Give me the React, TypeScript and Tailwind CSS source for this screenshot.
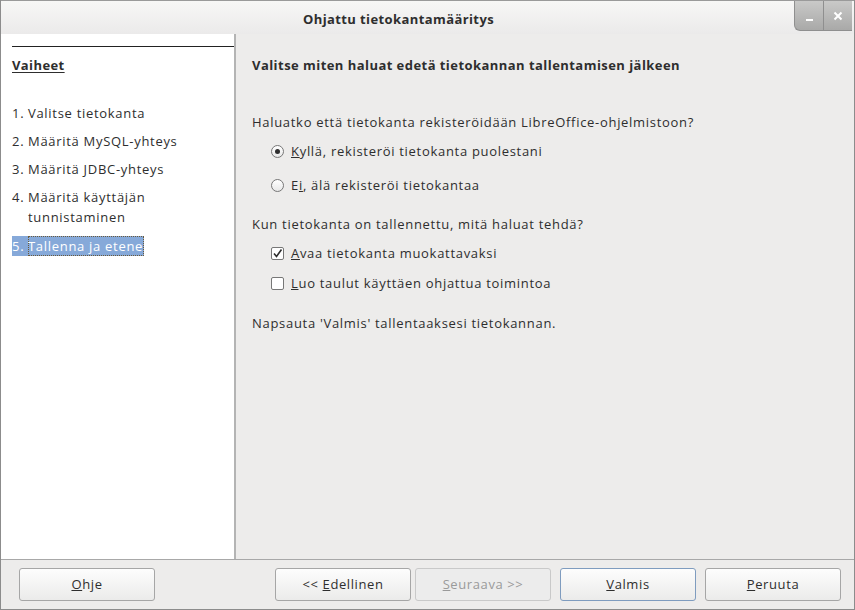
import React from 'react';

const font = { fontFamily: '"Open Sans", "DejaVu Sans", sans-serif' };

function Btn({ children, disabled, focused, className = '' }: { children: React.ReactNode; disabled?: boolean; focused?: boolean; className?: string }) {
  return (
    <div
      className={`h-[33px] w-[136px] flex items-center justify-center rounded-[3px] border text-[13px] tracking-[0.6px] ${
        focused ? 'border-[#7f9cbf]' : 'border-[#a6a6a6]'
      } ${disabled ? 'text-[#9a9a9a] bg-[#ececec] border-[#c9c9c9]' : 'text-[#2e2e2e] bg-gradient-to-b from-[#fdfdfd] to-[#ebebea]'} ${className}`}
    >
      {children}
    </div>
  );
}

function Step({ n, children }: { n: string; children: React.ReactNode }) {
  return (
    <div className="flex">
      <span className="w-[16px] shrink-0">{n}</span>
      <span>{children}</span>
    </div>
  );
}

export default function App() {
  return (
    <div className="w-[855px] h-[610px] flex flex-col bg-[#edeceb] border-x border-b border-[#8c8c8c] overflow-hidden text-[#2e3436]" style={font}>
      {/* title bar */}
      <div className="h-[34px] flex items-start relative bg-gradient-to-b from-[#f7f7f6] to-[#ebeaea] border-t border-[#9a9a9a]">
        <div className="flex-1 text-center pt-[9px] text-[13px] font-bold tracking-[0.4px] text-[#2e2e2e] pl-[-20px] mr-[110px] ml-[52px]">Ohjattu tietokantamääritys</div>
        <div className="absolute right-[2px] top-0 flex h-[30px] rounded-bl-[6px] overflow-hidden bg-gradient-to-b from-[#c9c9c8] to-[#a9a9a8] border-l border-b border-[#8f8f8f]">
          <div className="w-[28px] flex items-end justify-center pb-[9px]">
            <span className="w-[7px] h-[2px] bg-white" />
          </div>
          <div className="w-px bg-[#8f8f8f]" />
          <div className="w-[28px] flex items-center justify-center">
            <svg width="10" height="10" viewBox="0 0 10 10">
              <path d="M1.5 1.5 L8.5 8.5 M8.5 1.5 L1.5 8.5" stroke="white" strokeWidth="2" />
            </svg>
          </div>
        </div>
      </div>

      <div className="flex-1 flex">
        {/* steps panel */}
        <div className="w-[235px] bg-white border-r-2 border-[#b4b4b4] pl-[11px] pt-[12px] text-[13px] tracking-[0.7px] text-[#2e2e2e]">
          <div className="h-px bg-[#222]" />
          <div className="mt-[10px] font-bold tracking-[0.4px] underline underline-offset-2 leading-[16px]">Vaiheet</div>
          <div className="mt-[32px] flex flex-col gap-[11px] leading-[17px]">
            <Step n="1.">Valitse tietokanta</Step>
            <Step n="2.">Määritä MySQL-yhteys</Step>
            <Step n="3.">Määritä JDBC-yhteys</Step>
            <div className="flex">
              <span className="w-[16px] shrink-0">4.</span>
              <span className="leading-[20px] -mt-[2px]">Määritä käyttäjän<br />tunnistaminen</span>
            </div>
            <div className="flex -mt-[2px]">
              <span className="bg-[#86a9d9] text-white h-[20px] leading-[20px] flex">
                <span className="w-[16px]">5.</span>
                <span className="outline outline-1 outline-dotted outline-[#6b5a3a] -outline-offset-1 pr-[1px]">Tallenna ja etene</span>
              </span>
            </div>
          </div>
        </div>

        {/* content */}
        <div className="flex-1 pl-[16px] pt-[23px] text-[13px] tracking-[0.7px] text-[#2e2e2e]">
          <div className="font-bold tracking-[0.45px] leading-[16px]">Valitse miten haluat edetä tietokannan tallentamisen jälkeen</div>
          <div className="mt-[41px] leading-[16px]">Haluatko että tietokanta rekisteröidään LibreOffice-ohjelmistoon?</div>
          <div className="mt-[13px] pl-[19px] flex items-center gap-[7px] leading-[16px]">
            <span className="w-[13px] h-[13px] rounded-full border border-[#777] bg-gradient-to-b from-white to-[#e8e8e8] flex items-center justify-center">
              <span className="w-[5px] h-[5px] rounded-full bg-[#2e2e2e]" />
            </span>
            <span><span className="underline">K</span>yllä, rekisteröi tietokanta puolestani</span>
          </div>
          <div className="mt-[18px] pl-[19px] flex items-center gap-[7px] leading-[16px]">
            <span className="w-[13px] h-[13px] rounded-full border border-[#777] bg-gradient-to-b from-white to-[#e8e8e8]" />
            <span>E<span className="underline">i</span>, älä rekisteröi tietokantaa</span>
          </div>
          <div className="mt-[23px] leading-[16px]">Kun tietokanta on tallennettu, mitä haluat tehdä?</div>
          <div className="mt-[13px] pl-[19px] flex items-center gap-[7px] leading-[16px]">
            <span className="w-[13px] h-[13px] rounded-[2px] border border-[#777] bg-white flex items-center justify-center">
              <svg width="11" height="11" viewBox="0 0 11 11">
                <path d="M2 5.5 L4.5 8.5 L9.5 1.5" stroke="#2e2e2e" strokeWidth="1.6" fill="none" />
              </svg>
            </span>
            <span><span className="underline">A</span>vaa tietokanta muokattavaksi</span>
          </div>
          <div className="mt-[14px] pl-[19px] flex items-center gap-[7px] leading-[16px]">
            <span className="w-[13px] h-[13px] rounded-[2px] border border-[#777] bg-white" />
            <span><span className="underline">L</span>uo taulut käyttäen ohjattua toimintoa</span>
          </div>
          <div className="mt-[24px] leading-[16px]">Napsauta 'Valmis' tallentaaksesi tietokannan.</div>
        </div>
      </div>

      {/* button row */}
      <div className="h-[50px] border-t border-[#a8a8a8] flex items-start pt-[8px] pl-[18px] pr-[13px]">
        <Btn><span><span className="underline">O</span>hje</span></Btn>
        <div className="flex-1" />
        <div className="flex gap-[4px]">
          <Btn>&lt;&lt; <span className="underline ml-1">E</span>dellinen</Btn>
          <Btn disabled><span className="underline">S</span>euraava &gt;&gt;</Btn>
          <Btn focused className="ml-[5px]"><span className="underline">V</span>almis</Btn>
          <Btn className="ml-[5px]"><span className="underline">P</span>eruuta</Btn>
        </div>
      </div>
    </div>
  );
}
